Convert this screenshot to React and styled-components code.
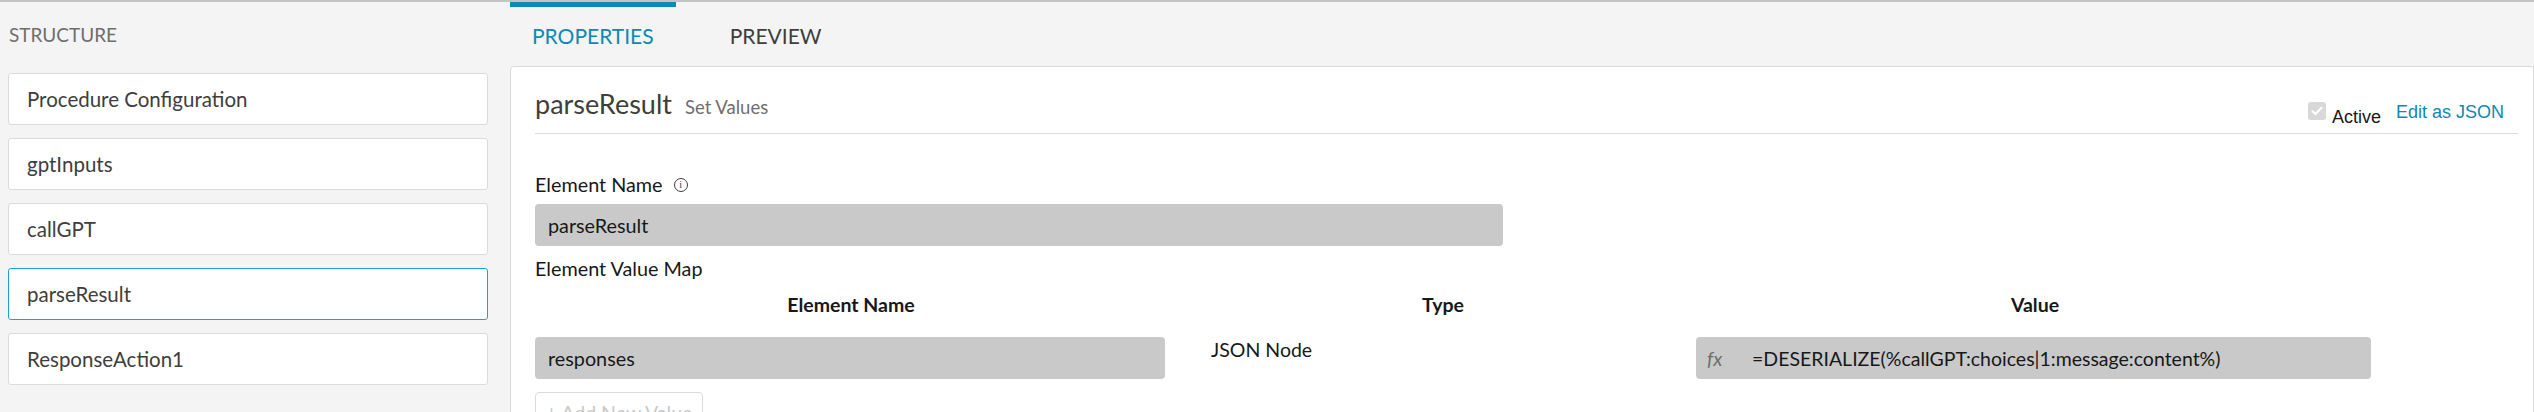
import React from 'react';
import styled, { createGlobalStyle } from 'styled-components';

const GlobalStyle = createGlobalStyle`
  html, body { margin: 0; padding: 0; background: #f4f4f4; }
  body { font-family: Lato, "Noto Sans", sans-serif; color: #181818; overflow: hidden; }
  * { box-sizing: border-box; }
`;

const Page = styled.div`
  display: flex;
  width: 2534px;
  height: 412px;
  border-top: 2px solid #c4c4c4;
  background: #f4f4f4;
  overflow: hidden;
`;

const Sidebar = styled.aside`
  width: 510px;
  flex: none;
  padding: 21px 0 0 8px;
`;

const SideTitle = styled.div`
  font-size: 19px;
  line-height: 24px;
  color: #706e6b;
  padding-left: 1px;
  margin-bottom: 26px;
`;

const NodeList = styled.div`
  display: flex;
  flex-direction: column;
  gap: 13px;
  width: 480px;
`;

const NodeItem = styled.div`
  height: 52px;
  background: #fff;
  border: 1px solid ${p => (p.$active ? '#1b9fde' : '#dddbda')};
  border-radius: 3px;
  display: flex;
  align-items: center;
  padding-left: 18px;
  font-size: 20.5px;
  color: #3e3e3c;
`;

const Main = styled.section`
  flex: 1;
  display: flex;
  flex-direction: column;
  min-width: 0;
`;

const Tabs = styled.div`
  display: flex;
  gap: 32px;
  height: 64px;
  flex: none;
`;

const Tab = styled.div`
  border-top: 5px solid ${p => (p.$active ? '#0c8ab5' : 'transparent')};
  padding: 17px 22px 0;
  font-size: 21px;
  line-height: 24px;
  color: ${p => (p.$active ? '#0c8ab5' : '#3e3e3c')};
`;

const Panel = styled.div`
  flex: 1;
  background: #fff;
  border: 1px solid #dddbda;
  border-radius: 4px 0 0 0;
  padding: 0 15px 0 24px;
`;

const PanelHeader = styled.div`
  display: flex;
  align-items: flex-start;
  height: 67px;
  border-bottom: 1px solid #dddbda;
`;

const TitleGroup = styled.div`
  display: flex;
  align-items: baseline;
  gap: 13px;
  padding-top: 21px;
`;

const Title = styled.span`
  font-size: 27px;
  line-height: 32px;
  color: #3e3e3c;
`;

const Subtitle = styled.span`
  font-size: 18.5px;
  color: #706e6b;
`;

const HeaderActions = styled.div`
  margin-left: auto;
  display: flex;
  align-items: flex-start;
  padding-top: 35px;
  padding-right: 14px;
  font-family: "Liberation Sans", Arial, sans-serif;
  font-size: 18px;
  line-height: 20px;
`;

const CheckBox = styled.span`
  width: 18px;
  height: 18px;
  border-radius: 3px;
  background: #d8d8d8;
  display: inline-flex;
  align-items: center;
  justify-content: center;
  margin-right: 6px;
`;

const ActiveLabel = styled.span`
  color: #181818;
  padding-top: 5px;
  margin-right: 15px;
`;

const LinkText = styled.a`
  color: #0c8ab5;
  text-decoration: none;
  cursor: pointer;
`;

const Body = styled.div`
  padding-top: 39px;
`;

const FieldLabel = styled.div`
  display: flex;
  align-items: center;
  gap: 11px;
  font-size: 19.8px;
  line-height: 23px;
  color: #181818;
  margin-bottom: ${p => p.$mb || 0}px;
`;

const InfoIcon = styled.span`
  width: 14px;
  height: 14px;
  border: 1.2px solid #3e3e3c;
  border-radius: 50%;
  display: inline-flex;
  align-items: center;
  justify-content: center;
  font-family: "Liberation Serif", serif;
  font-size: 10px;
  line-height: 1;
  color: #3e3e3c;
`;

const GrayInput = styled.div`
  height: 42px;
  width: ${p => p.$w}px;
  background: #c9c9c9;
  border-radius: 4px;
  display: flex;
  align-items: center;
  padding-left: 13px;
  font-size: 19.8px;
  color: #181818;
  margin-bottom: ${p => p.$mb || 0}px;
`;

const MapHeader = styled.div`
  display: grid;
  grid-template-columns: repeat(3, 592px);
  padding-left: 20px;
  margin-top: 13px;
  margin-bottom: 21px;
`;

const ColHead = styled.div`
  text-align: center;
  font-size: 19.5px;
  line-height: 23px;
  font-weight: 700;
  color: #181818;
`;

const MapRow = styled.div`
  display: grid;
  grid-template-columns: 630px 531px 675px;
  align-items: start;
`;

const TypeText = styled.div`
  padding: 1px 0 0 46px;
  font-size: 19.5px;
  line-height: 23px;
  color: #181818;
`;

const FormulaBox = styled.div`
  height: 42px;
  background: #c9c9c9;
  border-radius: 4px;
  display: flex;
  align-items: center;
  padding-left: 11px;
  font-size: 19.5px;
  color: #181818;
`;

const Fx = styled.span`
  font-style: italic;
  color: #706e6b;
  width: 45px;
  flex: none;
`;

const AddButton = styled.div`
  margin-top: 13px;
  width: 168px;
  height: 40px;
  border: 1px solid #dddbda;
  border-radius: 4px;
  background: #fff;
  display: flex;
  align-items: center;
  justify-content: center;
  font-size: 19.5px;
  color: #c9c9c9;
`;

const nodes = ['Procedure Configuration', 'gptInputs', 'callGPT', 'parseResult', 'ResponseAction1'];

export default function App() {
  return (
    <>
      <GlobalStyle />
      <Page>
        <Sidebar>
          <SideTitle>STRUCTURE</SideTitle>
          <NodeList>
            {nodes.map(n => (
              <NodeItem key={n} $active={n === 'parseResult'}>{n}</NodeItem>
            ))}
          </NodeList>
        </Sidebar>
        <Main>
          <Tabs>
            <Tab $active>PROPERTIES</Tab>
            <Tab>PREVIEW</Tab>
          </Tabs>
          <Panel>
            <PanelHeader>
              <TitleGroup>
                <Title>parseResult</Title>
                <Subtitle>Set Values</Subtitle>
              </TitleGroup>
              <HeaderActions>
                <CheckBox>
                  <svg width="12" height="10" viewBox="0 0 12 10">
                    <path d="M1.5 5.2 L4.5 8 L10.5 1.8" fill="none" stroke="#fff" strokeWidth="2" strokeLinecap="round" strokeLinejoin="round" />
                  </svg>
                </CheckBox>
                <ActiveLabel>Active</ActiveLabel>
                <LinkText>Edit as JSON</LinkText>
              </HeaderActions>
            </PanelHeader>
            <Body>
              <FieldLabel $mb={8}>
                Element Name <InfoIcon>i</InfoIcon>
              </FieldLabel>
              <GrayInput $w={968} $mb={11}>parseResult</GrayInput>
              <FieldLabel>Element Value Map</FieldLabel>
              <MapHeader>
                <ColHead>Element Name</ColHead>
                <ColHead>Type</ColHead>
                <ColHead>Value</ColHead>
              </MapHeader>
              <MapRow>
                <GrayInput $w={630}>responses</GrayInput>
                <TypeText>JSON Node</TypeText>
                <FormulaBox>
                  <Fx>fx</Fx>
                  =DESERIALIZE(%callGPT:choices|1:message:content%)
                </FormulaBox>
              </MapRow>
              <AddButton>+ Add New Value</AddButton>
            </Body>
          </Panel>
        </Main>
      </Page>
    </>
  );
}
